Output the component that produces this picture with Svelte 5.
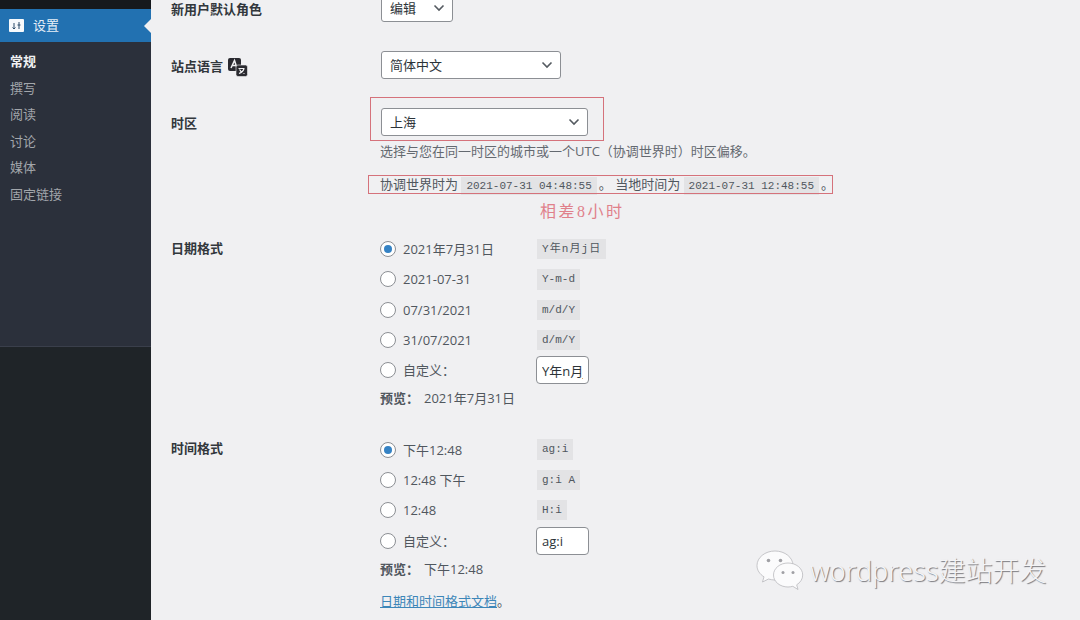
<script>
    const dateFormats = [
        { label: "2021年7月31日", code: "Y年n月j日", wide: true, checked: true },
        { label: "2021-07-31", code: "Y-m-d" },
        { label: "07/31/2021", code: "m/d/Y" },
        { label: "31/07/2021", code: "d/m/Y" },
    ];
    const timeFormats = [
        { label: "下午12:48", code: "ag:i", checked: true },
        { label: "12:48 下午", code: "g:i A" },
        { label: "12:48", code: "H:i" },
    ];
    const subMenu = ["常规", "撰写", "阅读", "讨论", "媒体", "固定链接"];
</script>

<div class="page">
    <aside class="sidebar">
        <div class="adminbar"></div>
        <div class="current">
            <svg class="settings-icon" width="15" height="13" viewBox="0 0 15 13">
                <rect width="15" height="13" rx="1" fill="#f7fafc" />
                <path d="M5 4v6M3.500 8.500 5 10l1.500-1.500M10 3v7M8.500 6h3" stroke="#2a4a68" stroke-width="1" fill="none" />
            </svg>
            <span>设置</span>
        </div>
        <ul class="submenu">
            {#each subMenu as item, i}
                <li class:active={i === 0}>{item}</li>
            {/each}
        </ul>
    </aside>

    <main class="content">
        <div class="row first">
            <div class="label">新用户默认角色</div>
            <div class="field">
                <select class="role"><option>编辑</option></select>
            </div>
        </div>

        <div class="row lang">
            <div class="label">
                站点语言
                <svg class="lang-icon" width="20" height="19" viewBox="0 0 20 19">
                    <rect x="0" y="0" width="13" height="13" rx="2" fill="#2a2a30" />
                    <path d="M3 10 6.500 2.500 9 10M4.500 7.500h4" stroke="#f0f0f2" stroke-width="1.500" fill="none" />
                    <rect x="8" y="7" width="11.500" height="11.500" rx="2" fill="#2a2a30" stroke="#f0f0f2" stroke-width=".6" />
                    <path d="M10.500 10.500h6M16 10.500c-.6 2.400-2.400 4-5 5M11.500 11.500c.8 1.800 2.500 3.300 5 4" stroke="#f0f0f2" stroke-width="1.200" fill="none" />
                </svg>
            </div>
            <div class="field">
                <select class="language"><option>简体中文</option></select>
            </div>
        </div>

        <div class="row tz">
            <div class="label">时区</div>
            <div class="field">
                <div class="tz-select">
                    <select class="zone"><option>上海</option></select>
                    <div class="mark mark-zone"></div>
                </div>
                <p class="desc">选择与您在同一时区的城市或一个UTC（协调世界时）时区偏移。</p>
                <p class="now">
                    <span class="mark mark-now"></span>
                    协调世界时为 <code>2021-07-31 04:48:55</code>。 当地时间为 <code>2021-07-31 12:48:55</code>。
                </p>
                <p class="note">相差8小时</p>
            </div>
        </div>

        <div class="row date">
            <div class="label">日期格式</div>
            <div class="field">
                {#each dateFormats as f}
                    <label class="option">
                        <input type="radio" name="date" checked={f.checked} />
                        <span class="opt-text">{f.label}</span>
                        <code class:wide={f.wide}>{f.code}</code>
                    </label>
                {/each}
                <label class="option custom">
                    <input type="radio" name="date" />
                    <span class="opt-text">自定义：</span>
                    <input class="small" type="text" value="Y年n月j日" />
                </label>
                <p class="preview"><strong>预览：</strong><span>2021年7月31日</span></p>
            </div>
        </div>

        <div class="row time">
            <div class="label">时间格式</div>
            <div class="field">
                {#each timeFormats as f}
                    <label class="option">
                        <input type="radio" name="time" checked={f.checked} />
                        <span class="opt-text">{f.label}</span>
                        <code>{f.code}</code>
                    </label>
                {/each}
                <label class="option custom">
                    <input type="radio" name="time" />
                    <span class="opt-text">自定义：</span>
                    <input class="small" type="text" value="ag:i" />
                </label>
                <p class="preview"><strong>预览：</strong><span>下午12:48</span></p>
                <p class="doc"><a href="#doc">日期和时间格式文档</a>。</p>
            </div>
        </div>
    </main>

    <div class="watermark">
        <svg width="48" height="42" viewBox="0 0 48 42">
            <g fill="#fbfbfc" stroke="#b0b0b5" stroke-width=".7">
                <path d="M19 1C9 1 1 7.500 1 15.500c0 4.700 2.700 8.700 7 11.300L6.500 32l6-3c2 .6 4.300 1 6.500 1 10 0 18-6.500 18-14.500S29 1 19 1z" />
                <path d="M32 13c-8 0-14.500 5.300-14.500 12S24 37 32 37c1.700 0 3.300-.3 4.800-.7L42 39.500l-1.300-4.700c3.700-2.300 6-5.800 6-9.800C46.700 18.300 40 13 32 13z" />
            </g>
            <g fill="#a0a0a5">
                <circle cx="12.500" cy="10.500" r="1.800" />
                <circle cx="24.500" cy="10.500" r="1.800" />
                <circle cx="27" cy="22.500" r="1.500" />
                <circle cx="37" cy="22.500" r="1.500" />
            </g>
        </svg>
        <span>wordpress建站开发</span>
    </div>
</div>

<style>
    :global(body) {
        margin: 0;
        background: #f0f0f2;
    }
    .page {
        display: flex;
        position: relative;
        width: 1080px;
        height: 620px;
        overflow: hidden;
        background: #f0f0f2;
        color: #50575e;
        font: 13px/20px "Open Sans", "Noto Sans CJK SC", sans-serif;
    }

    .sidebar {
        flex: 0 0 151px;
        background: #1f2428;
        height: 620px;
    }
    .adminbar {
        height: 9px;
        background: #16191d;
    }
    .current {
        position: relative;
        display: flex;
        align-items: center;
        gap: 9px;
        height: 33px;
        padding-left: 9px;
        padding-bottom: 1px;
        box-sizing: border-box;
        background: #2271b1;
        color: #e6eff7;
    }
    .current::after {
        content: "";
        position: absolute;
        right: 0;
        top: 10px;
        border: 7px solid transparent;
        border-right-color: #f0f0f2;
        border-left-width: 0;
    }
    .submenu {
        list-style: none;
        margin: 0;
        padding: 6px 0 0 10px;
        height: 305px;
        box-sizing: border-box;
        background: #2b303b;
        border-bottom: 1px solid #3a3f4b;
        color: #a2a6ab;
    }
    .submenu li {
        height: 26.6px;
        line-height: 26.6px;
    }
    .submenu li.active {
        color: #f0f0f2;
        font-weight: 700;
    }

    .content {
        flex: 1;
        padding-left: 20px;
        min-width: 0;
    }
    .row {
        display: grid;
        grid-template-columns: 209px 1fr;
    }
    .label {
        color: #32373c;
        font-weight: 600;
        display: flex;
        align-items: flex-start;
        gap: 5px;
    }
    .lang-icon {
        margin-top: 2px;
    }
    .first {
        margin-top: -6px;
    }
    .first .label,
    .lang .label,
    .tz .label {
        padding-top: 5px;
    }
    .lang,
    .tz {
        margin-top: 29px;
    }
    .date {
        margin-top: 12px;
    }
    .time {
        margin-top: 26px;
    }
    .date .label,
    .time .label {
        margin-top: 4px;
    }

    select {
        display: block;
        appearance: none;
        height: 28px;
        margin: 0 0 0 1px;
        padding: 0 24px 0 8px;
        box-sizing: border-box;
        border: 1px solid #8c8f94;
        border-radius: 3px;
        color: #2c3338;
        font: inherit;
        background: #fff url("data:image/svg+xml,%3Csvg xmlns='http://www.w3.org/2000/svg' width='12' height='8' viewBox='0 0 12 8'%3E%3Cpath d='M1.500 1.500 6 6l4.500-4.500' fill='none' stroke='%23555b61' stroke-width='1.600'/%3E%3C/svg%3E") no-repeat right 7px center;
    }
    .role {
        width: 72px;
    }
    .language {
        width: 180px;
    }
    .zone {
        width: 207px;
    }
    .tz-select {
        position: relative;
        width: 208px;
    }
    .mark {
        position: absolute;
        border: 1px solid #d5727b;
        pointer-events: none;
    }
    .mark-zone {
        inset: -11px -16px -5px -10px;
    }
    p {
        margin: 0;
    }
    .desc {
        margin-top: 5px;
        color: #646970;
    }
    .now {
        position: relative;
        margin-top: 13px;
        width: 452px;
        white-space: nowrap;
    }
    .mark-now {
        inset: 1px -1px 0 -12px;
    }
    code {
        padding: 3px 5px;
        background: #e3e3e5;
        font: 11px/1.300 "Liberation Mono", "Noto Sans CJK SC", monospace;
        color: #50575e;
    }
    .now code {
        margin-right: 2px;
    }
    code.wide {
        letter-spacing: 1.100px;
    }
    .note {
        margin-top: 8px;
        padding-left: 160px;
        color: #e0808b;
        font: 16px/20px "Liberation Serif", "Noto Sans CJK SC", serif;
        letter-spacing: 2.500px;
    }

    .option {
        display: flex;
        align-items: center;
        height: 30.300px;
    }
    .option code {
        flex: none;
    }
    .opt-text {
        flex: 0 0 134px;
    }
    input[type="radio"] {
        appearance: none;
        flex: none;
        width: 16px;
        height: 16px;
        margin: 0 7px 0 0;
        border: 1px solid #8c8f94;
        border-radius: 50%;
        background: #fff;
        display: flex;
        align-items: center;
        justify-content: center;
    }
    input[type="radio"]:checked::before {
        content: "";
        width: 8px;
        height: 8px;
        border-radius: 50%;
        background: #3582c4;
    }
    .small {
        width: 53px;
        height: 28px;
        box-sizing: border-box;
        padding: 0 5px;
        border: 1px solid #8c8f94;
        border-radius: 4px;
        background: #fff;
        color: #2c3338;
        font: inherit;
        margin-left: -1px;
    }
    .preview {
        margin-top: 3px;
        display: flex;
        gap: 8px;
        white-space: nowrap;
    }
    .preview strong {
        font-weight: 600;
        width: 36px;
    }
    .doc {
        margin-top: 12px;
    }
    .doc a {
        color: #3d86b8;
    }

    .watermark {
        position: absolute;
        left: 756px;
        top: 550px;
        display: flex;
        align-items: center;
        gap: 6px;
        font: 300 27px/40px "Noto Sans", "Noto Sans CJK SC", sans-serif;
        color: #f4f4f6;
        text-shadow: 1px 1px 1px #77777c;
        white-space: nowrap;
    }
</style>
